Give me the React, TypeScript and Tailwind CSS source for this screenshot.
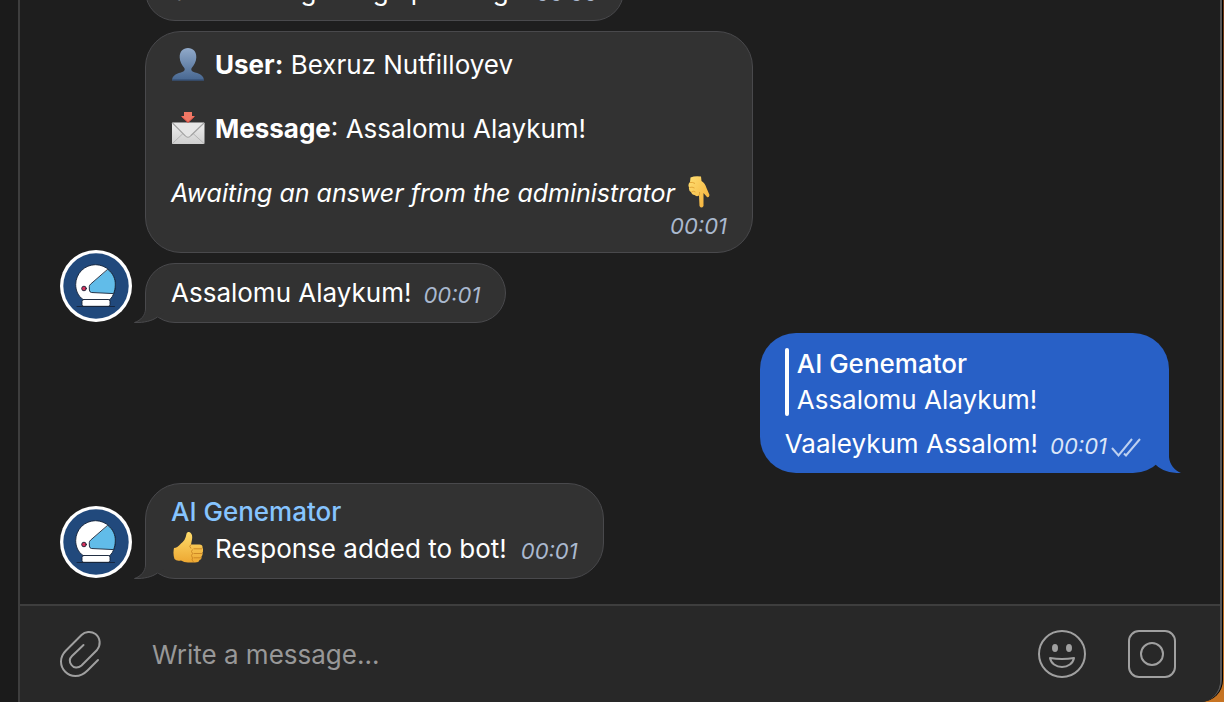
import { useState, type ReactNode } from "react";

function Avatar() {
  return (
    <svg viewBox="0 0 72 72" className="mb-px size-[72px] shrink-0" role="img" aria-label="AI Genemator">
      <circle cx="36" cy="36" r="36" fill="#fff" />
      <circle cx="36" cy="36" r="32.7" fill="#21497c" />
      <g stroke="#152238" strokeWidth="0.9" strokeLinejoin="round" strokeLinecap="round">
        <path d="M23 49.5C18 46 15.7 40.5 15.7 34.5A19.8 19.8 0 0 1 55.3 34.5C55.3 41 53.5 46 50 49.5Z" fill="#fff" />
        <path d="M48 19.500C53.200 23.500 55.500 29 55.300 35C55.200 38.500 54.500 41.500 53.600 43.600L31.500 42.500Q29.500 42.300 29.400 40L29.300 36.500Q29.300 35.300 30.300 34.400Z" fill="#61bce9" />
        <rect x="22" y="49.5" width="28" height="6.8" rx="1.8" fill="#fff" />
        <path d="M17 56.5H54.5" fill="none" />
        <circle cx="24" cy="38.5" r="2.3" fill="#d8315b" />
      </g>
    </svg>
  );
}

function Tail({ outgoing = false }: { outgoing?: boolean }) {
  return outgoing ? (
    <svg viewBox="0 0 32 36" className="absolute -right-3 bottom-0 h-9 w-8" aria-hidden="true">
      <path d="M20 0V20C20.500 27 25 33 32 36C20 36 13 33.500 7 28L0 22V0Z" fill="#2860c6" />
    </svg>
  ) : (
    <svg viewBox="0 0 36 30" className="absolute -bottom-px -left-3 h-[30px] w-9" aria-hidden="true">
      <path d="M12 0V16C11.500 23 7 27.500 0.500 29.500C10 30 17 28.500 23.500 24L30 20V0Z" fill="#323232" />
      <path d="M11.500 0V16C11.500 22 7 27.500 0.500 29.500C10 29.800 18 28 23.500 24" fill="none" stroke="#49494c" />
    </svg>
  );
}

function Person() {
  return (
    <svg viewBox="0 0 34 34" className="size-[34px] shrink-0" role="img" aria-label="User">
      <defs>
        <linearGradient id="person" x1="0" y1="0" x2="0" y2="1">
          <stop offset="0" stopColor="#91aaca" />
          <stop offset="1" stopColor="#466690" />
        </linearGradient>
      </defs>
      <path d="M17 0C22 0 25.500 3.500 25.300 9.500C25.200 14 23 17 20.700 20C19.500 22 21 23.500 24 24.500C30 26 32.700 28 33 32.500H1C1.300 28 4 26 10 24.500C13 23.500 14.500 22 13.300 20C11 17 8.800 14 8.700 9.500C8.500 3.500 12 0 17 0Z" fill="url(#person)" />
      <path d="M1 32H33" stroke="#30496d" />
    </svg>
  );
}

function Envelope() {
  return (
    <svg viewBox="0 0 34 34" className="size-[34px] shrink-0" role="img" aria-label="Incoming envelope">
      <defs>
        <linearGradient id="paper" x1="0" y1="0" x2="0" y2="1">
          <stop offset="0" stopColor="#eeeeee" />
          <stop offset="1" stopColor="#cfcfcf" />
        </linearGradient>
      </defs>
      <rect x="1" y="10.5" width="32.5" height="21.5" rx="0.8" fill="url(#paper)" />
      <path d="M1.500 31.500L12.500 21M33 31.500L21.500 21" stroke="#b5b5b5" fill="none" />
      <path d="M1.500 11L14 23.500Q17 27 20 23.500L33 11" stroke="#a2a2a2" strokeWidth="1.1" fill="#e6e6e6" />
      <path d="M13 0H21V4H23.800L17 10.500L10.200 4H13Z" fill="#f07865" />
      <path d="M10.500 4.500L17 10.500L23.500 4.500" stroke="#dc4f45" fill="none" />
    </svg>
  );
}

function PointDown() {
  return (
    <svg viewBox="0 0 24 34" className="h-[34px] w-6 shrink-0" role="img" aria-label="Pointing down">
      <defs>
        <linearGradient id="skin" x1="0" y1="0" x2="1" y2="1">
          <stop offset="0" stopColor="#ffdf72" />
          <stop offset="1" stopColor="#f3ae38" />
        </linearGradient>
      </defs>
      <path d="M3.500 1.500Q8 -0.500 14 0.500L14.500 5Q18 7 19.500 12L22.500 19Q22 22 20 21L16.500 17V30Q14.500 33 12.500 30L12 19.500Q9.500 21 7.500 19Q5 19 4 16Q1.500 14.500 2 11.500Q0.500 8.500 3 6Z" fill="url(#skin)" />
      <path d="M3 6.500Q6 6 8 7.500M2.500 11.500Q5 10.500 7.500 12M4.500 16Q6.500 14.500 8.500 16M12 19.500Q13 18.500 12.500 16" stroke="#dd9c2e" strokeWidth="0.8" fill="none" />
    </svg>
  );
}

function ThumbUp() {
  return (
    <svg viewBox="0 0 32 34" className="h-[34px] w-8 shrink-0" role="img" aria-label="Thumbs up">
      <defs>
        <linearGradient id="thumb" x1="0" y1="0" x2="0" y2="1">
          <stop offset="0" stopColor="#ffdc6b" />
          <stop offset="1" stopColor="#eda832" />
        </linearGradient>
      </defs>
      <path d="M3 16Q6 16 10 11.500Q14.500 8 15.200 3Q15.500 -0.500 18.200 0Q22 1.500 21 7.500L20 12.500H28.500Q32 12.500 31.500 16Q33 18 31.500 20.500Q32 23 30.500 24.500Q31 27.500 28.500 28Q28 30.500 24 30.500H17Q13 30.500 10 28.500Q5.500 29.500 3.500 27Q1.700 22 3 16Z" fill="url(#thumb)" />
      <path d="M20 12.500Q17.500 14 20 16.500M22.500 16.800H31M22.500 21.500H31M22.500 25.800H30M21.500 17.500Q19.500 19.500 21.500 21.500Q19.500 23.500 21.500 26Q20 28 22.500 30" stroke="#c98322" fill="none" strokeWidth="0.9" />
    </svg>
  );
}

function Time({ children }: { children: ReactNode }) {
  return <time className="text-[22px] leading-7 italic text-[#aab9cf]">{children}</time>;
}

const incoming = "relative border border-[#49494c] bg-[#323232] px-[25px]";

export default function App() {
  const [draft, setDraft] = useState("");
  return (
    <div className="flex h-screen overflow-hidden bg-[#1b1b1b] font-['Inter','Liberation_Sans',sans-serif] text-[26px] leading-8 text-white">
      <div className="w-[18px] shrink-0" />
      <div className="flex min-w-0 flex-1 bg-linear-to-b from-[#6b3410] to-[#c77423]">
        <div className="mr-px flex min-w-0 flex-1 rounded-br-[22px] bg-black pr-px">
          <div className="flex min-w-0 flex-1 flex-col overflow-hidden rounded-br-[22px] border-x-2 border-l-[#3e3e3e] border-r-[#555] bg-[#1e1e1e]">
            <main className="flex min-h-0 flex-1 flex-col items-start justify-end gap-2.5 overflow-hidden pr-[51px] pb-[25px] pl-10">
              <article className={`${incoming} ml-[85px] flex h-[60px] shrink-0 items-center rounded-[30px]`}>
                <div className="flex items-end gap-3.5">
                  <p>Sen mening isimga pushingi!</p>
                  <Time>00:00</Time>
                </div>
              </article>

              <article className={`${incoming} ml-[85px] flex h-[222px] shrink-0 flex-col rounded-[36px] pt-4`}>
                <p className="flex items-center gap-2.5"><Person /><span><b>User:</b> Bexruz Nutfilloyev</span></p>
                <p className="mt-[30px] flex items-center gap-2.5"><Envelope /><span><b>Message</b>: Assalomu Alaykum!</span></p>
                <p className="mt-[30px] flex items-center gap-3 pr-4"><em className="text-[25px]">Awaiting an answer from the administrator</em><PointDown /></p>
                <div className="mt-0.5 flex justify-end"><Time>00:01</Time></div>
              </article>

              <div className="-mt-[13px] flex shrink-0 items-end gap-[13px]">
                <Avatar />
                <article className={`${incoming} flex h-[60px] items-center rounded-[30px]`}>
                  <Tail />
                  <div className="flex items-end gap-3">
                    <p>Assalomu Alaykum!</p>
                    <Time>00:01</Time>
                  </div>
                </article>
              </div>

              <article className="relative flex h-[140px] shrink-0 flex-col self-end rounded-[36px] bg-[#2860c6] pt-[15px] pr-7 pl-[25px]">
                <Tail outgoing />
                <blockquote className="flex gap-2">
                  <span className="w-1 rounded-full bg-white" />
                  <div className="flex flex-col gap-1">
                    <strong className="font-medium">AI Genemator</strong>
                    <p>Assalomu Alaykum!</p>
                  </div>
                </blockquote>
                <div className="mt-3 flex items-end">
                  <p>Vaaleykum Assalom!</p>
                  <span className="ml-3 flex items-end gap-1">
                    <time className="text-[22px] leading-7 italic text-[#dce6f8]">00:01</time>
                    <svg viewBox="0 0 30 24" className="h-6 w-[30px]" role="img" aria-label="Read" fill="none" stroke="#bdd0f0" strokeWidth="2">
                      <path d="M1 12L7.500 19.500L21 3M13 17.500L15 19.500L29 3" />
                    </svg>
                  </span>
                </div>
              </article>

              <div className="flex shrink-0 items-end gap-[13px]">
                <Avatar />
                <article className={`${incoming} flex h-24 flex-col justify-center gap-1 rounded-[36px] rounded-bl-[30px]`}>
                  <Tail />
                  <strong className="font-medium text-[#86c4ff]">AI Genemator</strong>
                  <div className="flex items-center gap-3">
                    <ThumbUp />
                    <div className="flex items-end gap-3.5">
                      <p>Response added to bot!</p>
                      <Time>00:01</Time>
                    </div>
                  </div>
                </article>
              </div>
            </main>

            <form className="flex h-[98px] shrink-0 items-center border-t-2 border-[#3e3e3e] bg-[#282828] pr-11 pl-10" onSubmit={(e) => { e.preventDefault(); setDraft(""); }}>
              <button type="button" aria-label="Attach a file" className="shrink-0">
                <svg viewBox="0 0 42 48" className="h-12 w-[42px]" fill="none" stroke="#a0a0a0" strokeWidth="2" strokeLinecap="round">
                  <path d="M38 30L27.500 40.500Q22 46 15.500 46C7.500 46 1 39.500 1 31.500Q1 25.500 6 20.500L21.500 5C25 1.500 31 0.700 35.500 4C40.500 8 41 15 37 20L21.500 35.500C18 38.500 13.500 38 11.500 35C9.200 32 9.500 28.500 12 26L23.500 15" />
                </svg>
              </button>
              <input aria-label="Message" placeholder="Write a message..." value={draft} onChange={(e) => setDraft(e.target.value)} className="ml-[50px] min-w-0 flex-1 bg-transparent pt-0.5 outline-none placeholder:text-[#989898]" />
              <button type="button" aria-label="Emoji" className="shrink-0">
                <svg viewBox="0 0 48 48" className="size-12" fill="none" stroke="#a0a0a0" strokeWidth="2">
                  <circle cx="24" cy="24" r="23" />
                  <ellipse cx="17" cy="18" rx="3" ry="4" fill="#a0a0a0" stroke="none" />
                  <ellipse cx="31" cy="18" rx="3" ry="4" fill="#a0a0a0" stroke="none" />
                  <path d="M12 28Q24 30 36 28C35 33.500 30 37 24 37S13 33.500 12 28Z" strokeLinejoin="round" />
                </svg>
              </button>
              <button type="button" aria-label="Record a video message" className="ml-[42px] shrink-0">
                <svg viewBox="0 0 48 48" className="size-12" fill="none" stroke="#a0a0a0" strokeWidth="2">
                  <rect x="1" y="1" width="46" height="46" rx="10" />
                  <circle cx="24" cy="24" r="11" />
                </svg>
              </button>
            </form>
          </div>
        </div>
      </div>
    </div>
  );
}
